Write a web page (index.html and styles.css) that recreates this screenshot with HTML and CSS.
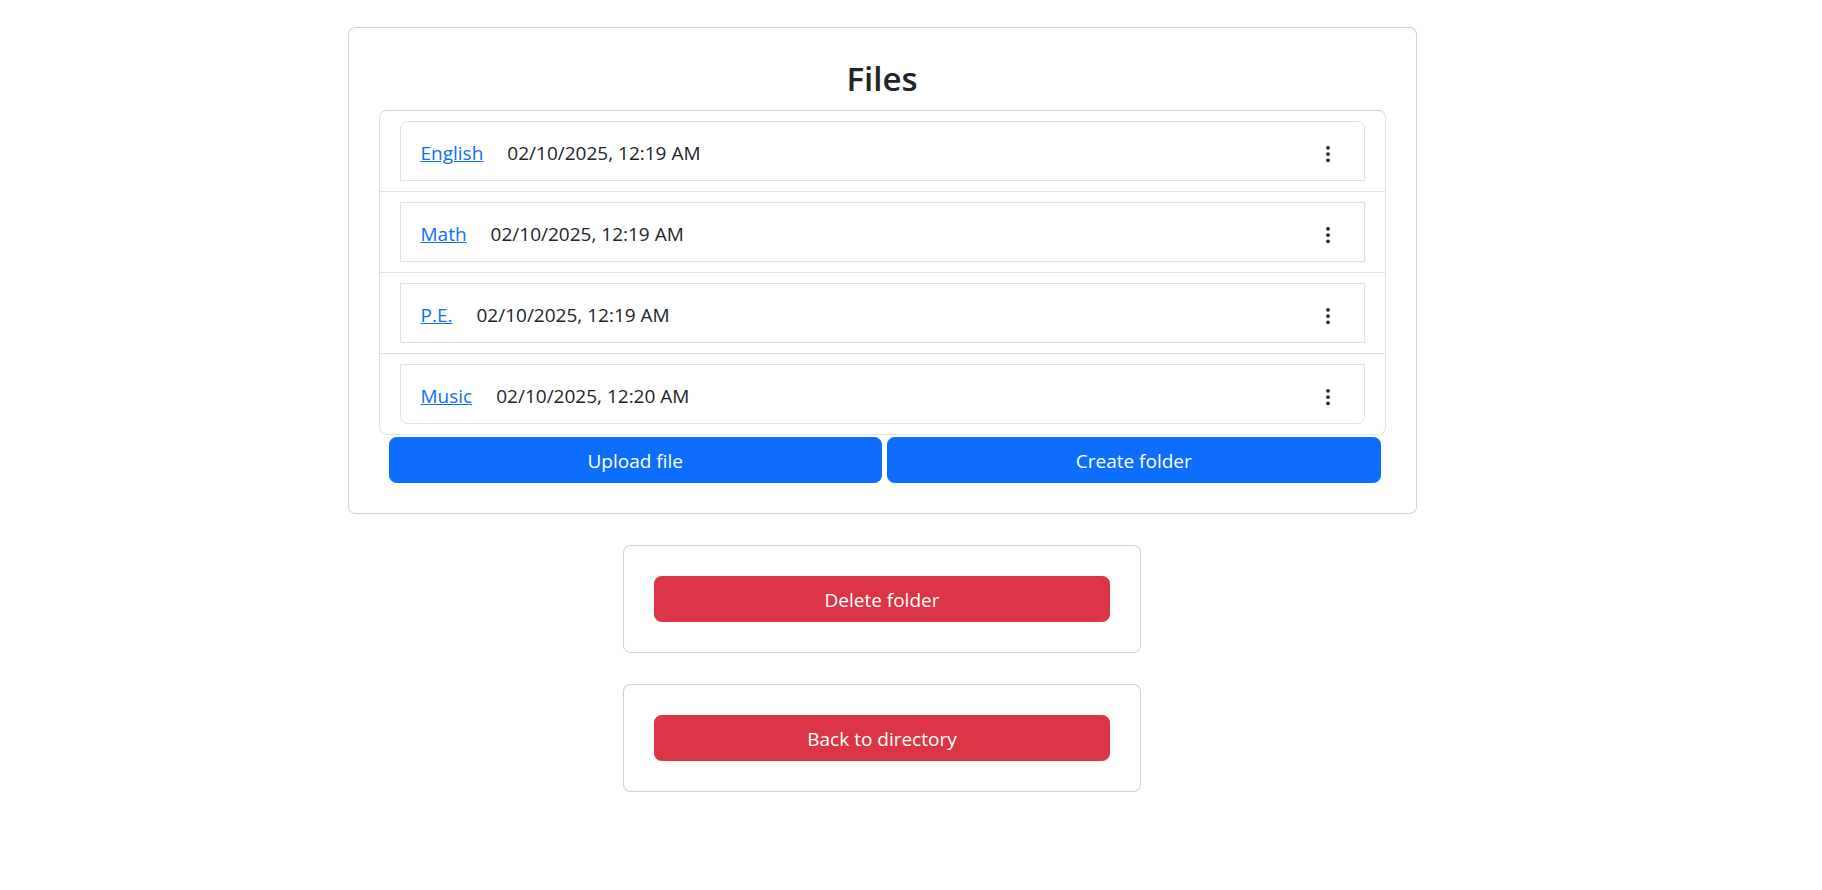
FILE: index.html
```html
<!DOCTYPE html>
<html lang="en">
<head>
<meta charset="utf-8">
<title>Files</title>
<link rel="stylesheet" href="styles.css">
</head>
<body>
<main class="page">
  <section class="panel files-panel">
    <h2 class="title">Files</h2>
    <div class="list">
      <div class="list-item">
        <div class="entry entry-first">
          <a class="entry-link" href="#">English</a>
          <span class="entry-date">02/10/2025, 12:19 AM</span>
          <span class="entry-menu"><svg viewBox="0 0 16 16" width="20" height="20" fill="currentColor"><path d="M9.5 13a1.5 1.5 0 1 1-3 0 1.5 1.5 0 0 1 3 0m0-5a1.5 1.5 0 1 1-3 0 1.5 1.5 0 0 1 3 0m0-5a1.5 1.5 0 1 1-3 0 1.5 1.5 0 0 1 3 0"/></svg></span>
        </div>
      </div>
      <div class="list-item">
        <div class="entry">
          <a class="entry-link" href="#">Math</a>
          <span class="entry-date">02/10/2025, 12:19 AM</span>
          <span class="entry-menu"><svg viewBox="0 0 16 16" width="20" height="20" fill="currentColor"><path d="M9.5 13a1.5 1.5 0 1 1-3 0 1.5 1.5 0 0 1 3 0m0-5a1.5 1.5 0 1 1-3 0 1.5 1.5 0 0 1 3 0m0-5a1.5 1.5 0 1 1-3 0 1.5 1.5 0 0 1 3 0"/></svg></span>
        </div>
      </div>
      <div class="list-item">
        <div class="entry">
          <a class="entry-link" href="#">P.E.</a>
          <span class="entry-date">02/10/2025, 12:19 AM</span>
          <span class="entry-menu"><svg viewBox="0 0 16 16" width="20" height="20" fill="currentColor"><path d="M9.5 13a1.5 1.5 0 1 1-3 0 1.5 1.5 0 0 1 3 0m0-5a1.5 1.5 0 1 1-3 0 1.5 1.5 0 0 1 3 0m0-5a1.5 1.5 0 1 1-3 0 1.5 1.5 0 0 1 3 0"/></svg></span>
        </div>
      </div>
      <div class="list-item">
        <div class="entry entry-last">
          <a class="entry-link" href="#">Music</a>
          <span class="entry-date">02/10/2025, 12:20 AM</span>
          <span class="entry-menu"><svg viewBox="0 0 16 16" width="20" height="20" fill="currentColor"><path d="M9.5 13a1.5 1.5 0 1 1-3 0 1.5 1.5 0 0 1 3 0m0-5a1.5 1.5 0 1 1-3 0 1.5 1.5 0 0 1 3 0m0-5a1.5 1.5 0 1 1-3 0 1.5 1.5 0 0 1 3 0"/></svg></span>
        </div>
      </div>
    </div>
    <div class="actions">
      <button class="btn btn-primary" type="button">Upload file</button>
      <button class="btn btn-primary" type="button">Create folder</button>
    </div>
  </section>

  <section class="panel small-panel">
    <button class="btn btn-danger" type="button">Delete folder</button>
  </section>

  <section class="panel small-panel">
    <button class="btn btn-danger" type="button">Back to directory</button>
  </section>
</main>
</body>
</html>
```

FILE: styles.css
```css
* {
  box-sizing: border-box;
}

html, body {
  margin: 0;
  padding: 0;
  background: #ffffff;
}

body {
  font-family: "Open Sans", "Noto Sans", sans-serif;
  font-size: 19px;
  line-height: 30px;
  color: #212529;
}

.page {
  width: 1764px;
  padding-top: 27px;
  display: flex;
  flex-direction: column;
  align-items: center;
  gap: 31px;
}

.panel {
  border: 1px solid rgba(0, 0, 0, 0.175);
  border-radius: 7.5px;
  padding: 30px;
  background: #fff;
}

.files-panel {
  width: 1069px;
}

.small-panel {
  width: 518px;
}

.title {
  margin: 0 0 10px;
  font-size: 33px;
  line-height: 42px;
  font-weight: 600;
  text-align: center;
  color: #212529;
}

.list {
  border: 1px solid #dee2e6;
  border-top-color: #d4d4d9;
  border-radius: 7.5px;
}

.list-item {
  padding: 10px 20px;
  border-top: 1px solid #dee2e6;
}

.list-item:first-child {
  border-top: none;
}

.entry {
  height: 60px;
  border: 1px solid #dee2e6;
  padding: 3px 26px 0 20px;
  display: flex;
  align-items: center;
}

.entry-first {
  border-radius: 7.5px 7.5px 0 0;
}

.entry-last {
  border-radius: 0 0 7.5px 7.5px;
}

.entry-link {
  color: #0d6efd;
  text-decoration: underline;
}

.entry-date {
  margin-left: 24px;
}

.entry-menu {
  margin-left: auto;
  display: flex;
  color: #212529;
  margin-top: 2px;
}

.actions {
  margin-top: 2px;
  padding: 0 5px 0 10px;
  display: flex;
  gap: 5px;
}

.btn {
  display: block;
  width: 100%;
  height: 46px;
  border-radius: 7.5px;
  border: 1px solid transparent;
  font-family: inherit;
  font-size: 19px;
  line-height: 30px;
  color: #ffffff;
  text-align: center;
  padding: 1px 0 0;
  cursor: pointer;
}

.actions .btn {
  flex: 1 1 0;
}

.btn-primary {
  background: #0d6efd;
  border-color: #0d6efd;
}

.btn-danger {
  background: #dc3545;
  border-color: #dc3545;
}
```
